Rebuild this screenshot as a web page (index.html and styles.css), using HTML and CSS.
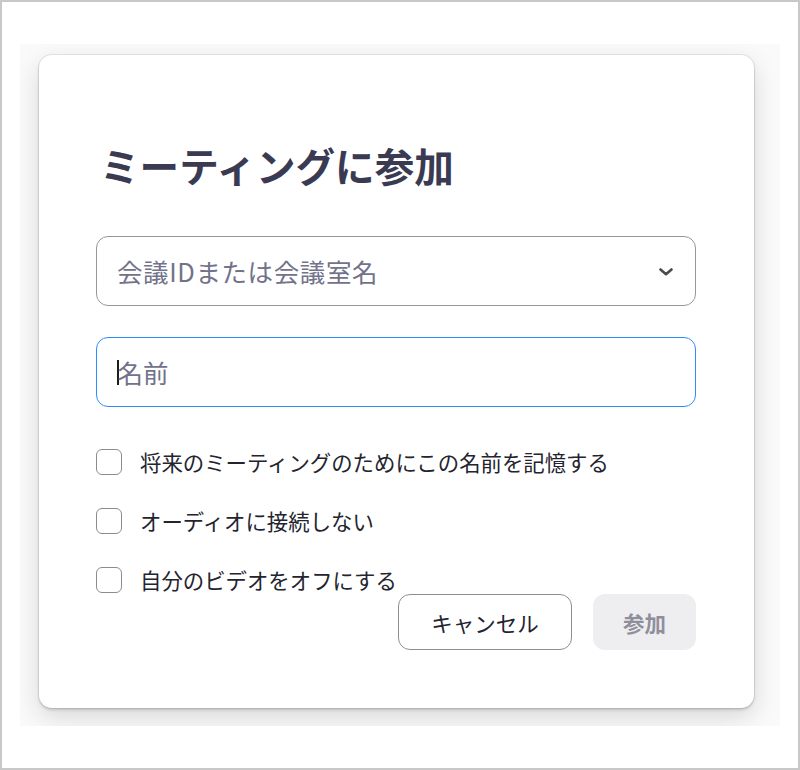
FILE: index.html
```html
<!DOCTYPE html>
<html lang="ja">
<head>
<meta charset="utf-8">
<title>ミーティングに参加</title>
<link rel="stylesheet" href="styles.css">
</head>
<body>
<div class="page">
  <div class="frame">
    <div class="card">
      <h1 class="title">ミーティングに参加</h1>
      <div class="field select">
        <span class="placeholder">会議IDまたは会議室名</span>
        <svg class="chevron" width="14" height="8" viewBox="0 0 14 8"><polyline points="1.5,1.5 7,6.2 12.5,1.5" fill="none" stroke="#4a4a4f" stroke-width="2.6" stroke-linecap="round" stroke-linejoin="round"/></svg>
      </div>
      <div class="field focused">
        <span class="caret"></span><span class="placeholder">名前</span>
      </div>
      <div class="options">
        <label class="option"><span class="box"></span><span class="label">将来のミーティングのためにこの名前を記憶する</span></label>
        <label class="option"><span class="box"></span><span class="label">オーディオに接続しない</span></label>
        <label class="option"><span class="box"></span><span class="label">自分のビデオをオフにする</span></label>
      </div>
      <div class="actions">
        <button class="btn cancel">キャンセル</button>
        <button class="btn join">参加</button>
      </div>
    </div>
  </div>
</div>
</body>
</html>
```

FILE: styles.css
```css
html, body {
  margin: 0;
  padding: 0;
  background: #ffffff;
}
body {
  font-family: "Noto Sans CJK JP", "Noto Sans", sans-serif;
}
.page {
  width: 800px;
  height: 770px;
  box-sizing: border-box;
  border: 2px solid #c8c8c8;
  padding: 42px 0 0 18px;
}
.frame {
  width: 760px;
  height: 682px;
  box-sizing: border-box;
  overflow: hidden;
  background: #fafafa;
  padding: 11px 0 0 19px;
}
.card {
  width: 715px;
  height: 653px;
  box-sizing: border-box;
  background: #ffffff;
  border-radius: 13px;
  box-shadow: 0 0 0 1px rgba(0, 0, 0, 0.07), 0 2px 3px rgba(0, 0, 0, 0.15), 0 9px 26px rgba(0, 0, 0, 0.14);
  padding: 88px 58px 0 57px;
  display: flex;
  flex-direction: column;
}
.title {
  margin: 0 0 0 4px;
  font-size: 39.6px;
  line-height: 44px;
  font-weight: 700;
  color: #3a3a53;
}
.field {
  margin-top: 49px;
  height: 70px;
  box-sizing: border-box;
  border: 1.5px solid #979797;
  border-radius: 12px;
  display: flex;
  align-items: center;
  padding: 0 22px 0 20px;
}
.field + .field {
  margin-top: 31px;
}
.field.focused {
  border-color: #2d8cff;
}
.placeholder {
  font-size: 25.5px;
  color: #72728a;
  line-height: 30px;
}
.select .placeholder {
  flex: 1;
  letter-spacing: 0.6px;
}
.chevron {
  display: block;
  margin-top: 2px;
}
.caret {
  width: 1.5px;
  height: 25px;
  background: #1c1c1c;
  margin-right: -1px;
}
.options {
  margin-top: 42px;
  display: flex;
  flex-direction: column;
  gap: 33px;
}
.option {
  display: flex;
  align-items: center;
  gap: 18px;
  height: 26px;
}
.box {
  width: 26px;
  height: 26px;
  box-sizing: border-box;
  border: 1.5px solid #8c8c8c;
  border-radius: 6px;
  flex: none;
}
.label {
  font-size: 21.4px;
  color: #24242f;
  line-height: 26px;
}
.actions {
  margin-top: 1px;
  display: flex;
  justify-content: flex-end;
  gap: 21px;
}
.btn {
  height: 56px;
  border-radius: 12px;
  font-family: "Noto Sans CJK JP", sans-serif;
  font-size: 21.5px;
  padding: 0;
  box-sizing: border-box;
  cursor: pointer;
}
.cancel {
  width: 174px;
  background: #ffffff;
  border: 1.5px solid #8e8e8e;
  color: #232333;
}
.join {
  width: 103px;
  background: #eeeef1;
  border: none;
  color: #8f8f9c;
  font-weight: 700;
}
```
